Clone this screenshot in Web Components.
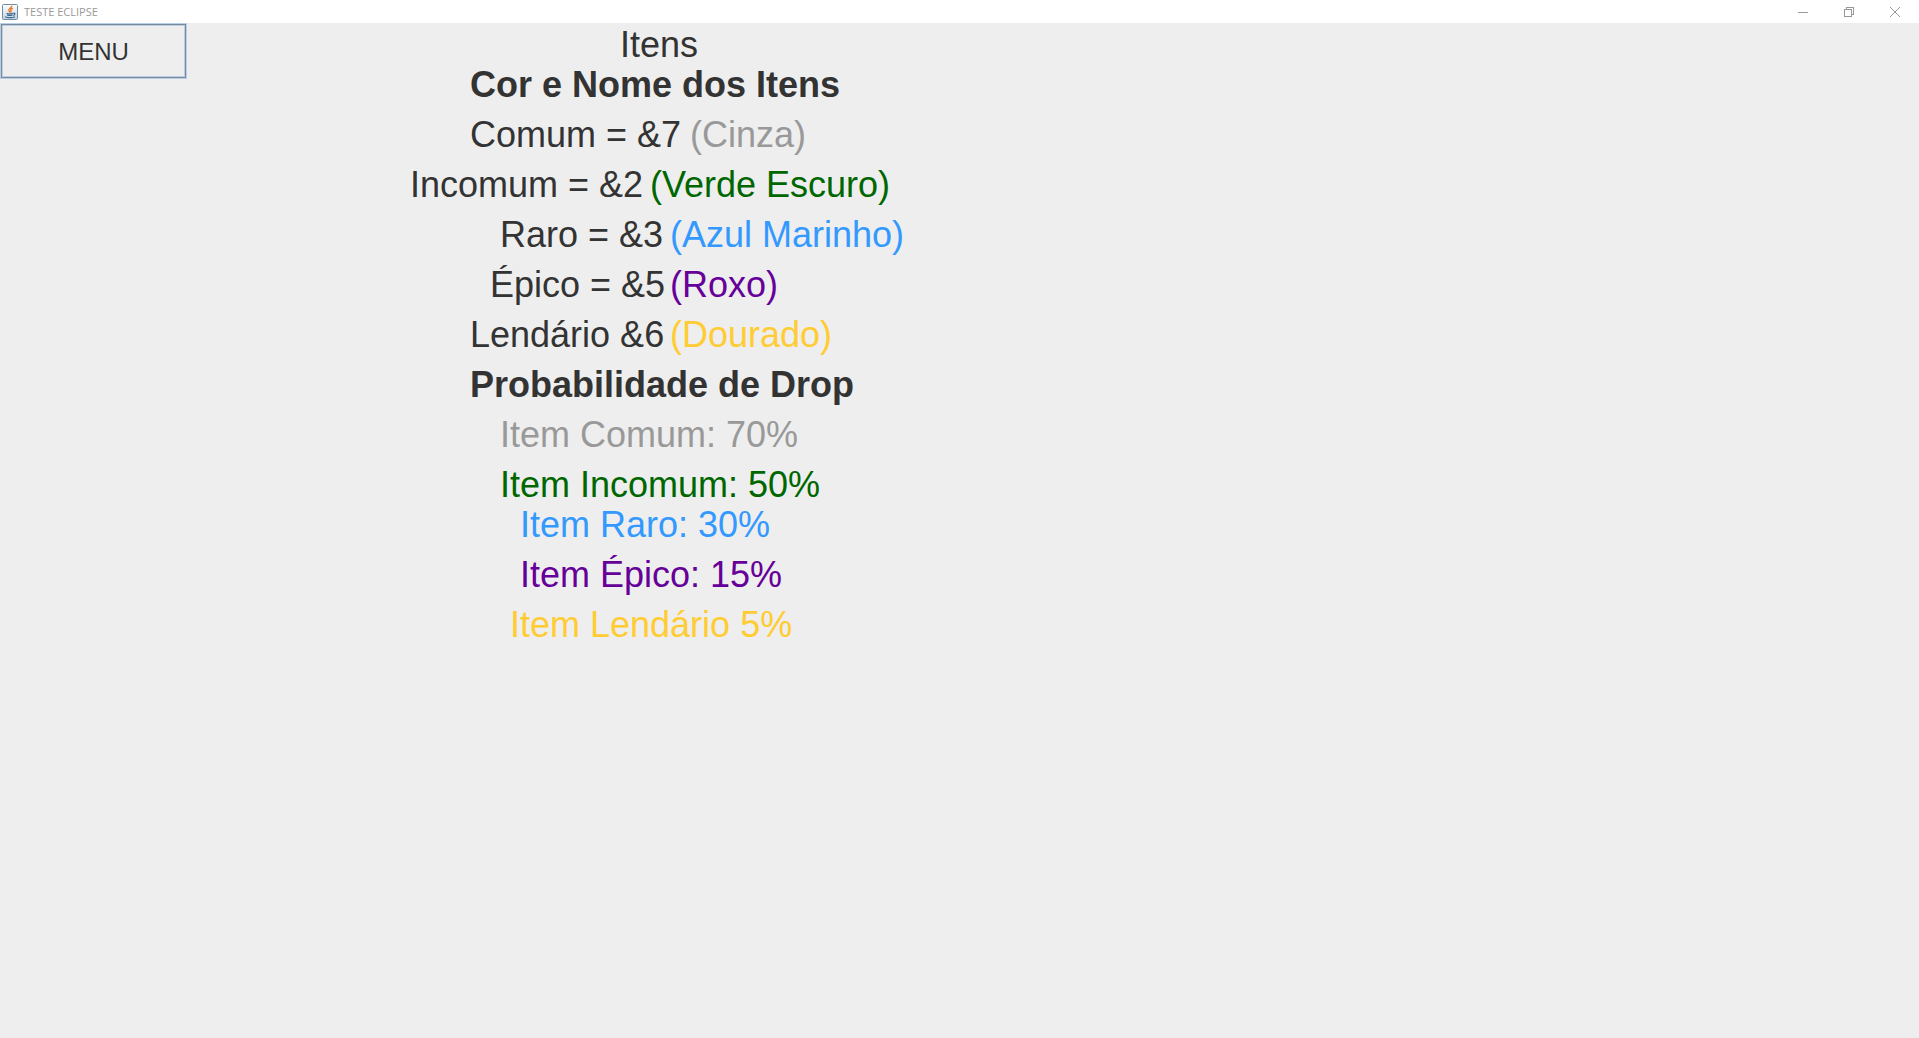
<!DOCTYPE html>
<html lang="pt-BR">
<head>
<meta charset="utf-8">
<title>TESTE ECLIPSE</title>
<style>
html, body { height: 100%; margin: 0; }
body { font-family: "Liberation Sans", Arial, sans-serif; color: #333; background: #eee; }
</style>
</head>
<body>
<app-window caption="TESTE ECLIPSE">
  <menu-button>MENU</menu-button>
  <item-panel></item-panel>
</app-window>
<script>
class AppWindow extends HTMLElement {
  connectedCallback() {
    this.attachShadow({ mode: "open" }).innerHTML = `
<style>
:host { display: flex; flex-direction: column; min-height: 100%; background: #eee; }
header { display: flex; align-items: center; height: 23px; background: #fff; padding: 0 1px 0 2px; box-sizing: border-box; }
.icon { width: 16px; height: 16px; flex: none; }
.title { flex: 1; margin-left: 6px; font: 11px/22px "Open Sans", "Noto Sans", sans-serif; color: #999; }
button { width: 46px; height: 20px; padding: 0; border: 0; background: none; display: flex; align-items: center; justify-content: center; }
main { display: flex; align-items: flex-start; flex: 1; }
</style>
<header>
  <svg class="icon" viewBox="0 0 16 16" aria-hidden="true">
    <defs><linearGradient id="g" x2="0" y2="1"><stop stop-color="#fff"/><stop offset="1" stop-color="#c3d3df"/></linearGradient></defs>
    <rect x=".5" y=".5" width="15" height="15" rx="1" fill="url(#g)" stroke="#6f8ba0"/>
    <path d="M9.8 1.8C10 4 6.400 4.500 6.800 6.300 7 7.300 7.800 7.600 7.800 8.600M10.800 4.400C9 5 8.200 5.800 9 6.800 9.400 7.400 9 8 8.600 8.500" fill="none" stroke="#e8701a" stroke-width="1.300"/>
    <path d="M4.500 9.200C6 9.900 9.500 9.800 11 9.200M5 10.900C6.500 11.500 9 11.500 10.500 10.900M3 12.800C5.500 14 10.500 14 13 12.800M11.300 9.300C13.600 8.800 13.200 10.900 11.300 11.400" fill="none" stroke="#3c6a8e" stroke-width="1.200"/>
  </svg>
  <span class="title"></span>
  <button aria-label="Minimizar"><svg width="10" height="10" shape-rendering="crispEdges"><path d="M0 5.500H10" stroke="#999"/></svg></button>
  <button aria-label="Restaurar"><svg width="10" height="10" shape-rendering="crispEdges"><path d="M.5 2.500H7.500V9.500H.5ZM2.500 2.500V.5H9.500V7.500H7.500" fill="none" stroke="#999"/></svg></button>
  <button aria-label="Fechar"><svg width="10" height="10"><path d="M0 0L10 10M10 0L0 10" stroke="#999"/></svg></button>
</header>
<main><slot></slot></main>`;
    this.shadowRoot.querySelector(".title").textContent = this.getAttribute("caption");
  }
}
customElements.define("app-window", AppWindow);

class MenuButton extends HTMLElement {
  connectedCallback() {
    this.attachShadow({ mode: "open" }).innerHTML = `
<style>
:host { display: block; flex: none; }
button { display: block; width: 187px; height: 56px; padding: 2px 0 0; font: 24px/28px "Liberation Sans", Arial, sans-serif; color: #333; background: #eee; border: 1px solid #b8cfe5; box-shadow: inset 0 0 0 1px #7a8a99, inset 0 0 0 2px #b8cfe5; }
</style>
<button type="button"><slot></slot></button>`;
  }
}
customElements.define("menu-button", MenuButton);

const TONES = { cinza: "#999", verde: "#060", azul: "#39f", roxo: "#609", dourado: "#fc3" };

class ItemRow extends HTMLElement {
  connectedCallback() {
    this.attachShadow({ mode: "open" }).innerHTML = `
<style>
:host { display: flex; margin-top: 10px; font-size: 36px; line-height: 40px; white-space: nowrap; }
:host([tight]) { margin-top: 0; }
h1, h2, span { margin: 0; font-size: inherit; font-weight: 400; }
h2 { font-weight: 700; }
.name { flex: none; }
</style>`;
    const add = (tag, text, tone) => {
      const el = document.createElement(tag);
      el.textContent = text;
      if (tone) el.style.color = TONES[tone];
      this.shadowRoot.append(el);
      return el;
    };
    const { name, width, note, tone, level, indent } = this.data;
    this.style.paddingLeft = indent + "px";
    if (note) {
      const el = add("span", name);
      el.className = "name";
      el.style.width = width + "px";
      add("span", note, tone);
    } else {
      add(level || "span", name, tone);
    }
  }
}
customElements.define("item-row", ItemRow);

class ItemPanel extends HTMLElement {
  connectedCallback() {
    this.attachShadow({ mode: "open" }).innerHTML = `
<style>:host { display: block; flex: 1; padding: 2px 0 0 223px; }</style>`;
    const rows = [
      { name: "Itens", level: "h1", indent: 210, tight: true },
      { name: "Cor e Nome dos Itens", level: "h2", indent: 60, tight: true },
      { name: "Comum = &7", width: 220, note: "(Cinza)", tone: "cinza", indent: 60 },
      { name: "Incomum = &2", width: 240, note: "(Verde Escuro)", tone: "verde", indent: 0 },
      { name: "Raro = &3", width: 170, note: "(Azul Marinho)", tone: "azul", indent: 90 },
      { name: "Épico = &5", width: 180, note: "(Roxo)", tone: "roxo", indent: 80 },
      { name: "Lendário &6", width: 200, note: "(Dourado)", tone: "dourado", indent: 60 },
      { name: "Probabilidade de Drop", level: "h2", indent: 60 },
      { name: "Item Comum: 70%", tone: "cinza", indent: 90 },
      { name: "Item Incomum: 50%", tone: "verde", indent: 90 },
      { name: "Item Raro: 30%", tone: "azul", indent: 110, tight: true },
      { name: "Item Épico: 15%", tone: "roxo", indent: 110 },
      { name: "Item Lendário 5%", tone: "dourado", indent: 100 },
    ];
    for (const data of rows) {
      const row = document.createElement("item-row");
      row.data = data;
      row.toggleAttribute("tight", !!data.tight);
      this.shadowRoot.append(row);
    }
  }
}
customElements.define("item-panel", ItemPanel);
</script>
</body>
</html>
